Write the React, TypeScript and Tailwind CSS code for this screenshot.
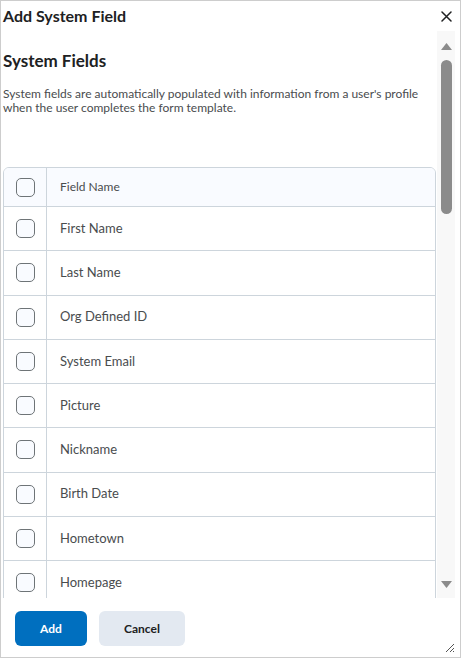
import React from 'react';

const fields = [
  'First Name',
  'Last Name',
  'Org Defined ID',
  'System Email',
  'Picture',
  'Nickname',
  'Birth Date',
  'Hometown',
  'Homepage',
];

const Checkbox = () => (
  <div className="w-[19px] h-[19px] rounded-[5px] border border-[#6e7477] bg-[#f9fbff]" />
);

const App = () => {
  return (
    <div
      className="w-[461px] h-[658px] bg-white border border-[#cdcdcd] flex flex-col text-[#202122]"
      style={{ fontFamily: 'Lato, "Open Sans", sans-serif' }}
    >
      {/* Header */}
      <div className="h-[29px] flex items-center justify-between pl-[2px] pr-[8px] shrink-0">
        <h1 className="text-[16px] font-bold leading-none">Add System Field</h1>
        <svg width="11" height="11" viewBox="0 0 11 11" className="mt-[2px]">
          <path d="M1 1L10 10M10 1L1 10" stroke="#202122" strokeWidth="1.5" strokeLinecap="round" />
        </svg>
      </div>

      {/* Body */}
      <div className="flex flex-1 min-h-0">
        <div className="flex-1 min-w-0 overflow-hidden pl-[2px] pr-[1px]">
          <h2 className="text-[17px] font-bold mt-[20px] leading-[22px]">System Fields</h2>
          <p className="text-[12px] leading-[14px] text-[#494c4e] mt-[15px] pr-[8px]">
            System fields are automatically populated with information from a user's profile
            when the user completes the form template.
          </p>

          <div className="mt-[52px] border border-[#cdd5dc] rounded-t-[6px] overflow-hidden">
            <div className="flex h-[39px] bg-[#f9fbff] border-b border-[#cdd5dc]">
              <div className="w-[43px] shrink-0 flex items-center justify-center border-r border-[#cdd5dc]">
                <Checkbox />
              </div>
              <div className="flex items-center pl-[13px] text-[12px] font-normal text-[#494c4e]">Field Name</div>
            </div>
            {fields.map((f) => (
              <div key={f} className="flex h-[44.25px] border-b border-[#cdd5dc]">
                <div className="w-[43px] shrink-0 flex items-center justify-center border-r border-[#cdd5dc]">
                  <Checkbox />
                </div>
                <div className="flex items-center pl-[13px] text-[13px] text-[#494c4e]">{f}</div>
              </div>
            ))}
          </div>
        </div>

        {/* Scrollbar */}
        <div className="w-[18px] shrink-0 bg-[#f8f8f8] flex flex-col items-center py-[12px] mr-[5px] mt-[1px]">
          <svg width="11" height="7" viewBox="0 0 11 7">
            <path d="M5.5 0L11 7H0Z" fill="#8b8b8b" />
          </svg>
          <div className="w-[11px] h-[154px] rounded-full bg-[#8b8b8b] mt-[10px]" />
          <div className="flex-1" />
          <svg width="11" height="7" viewBox="0 0 11 7" className="mb-[-2px]">
            <path d="M0 0H11L5.5 7Z" fill="#8b8b8b" />
          </svg>
        </div>
      </div>

      {/* Footer */}
      <div className="h-[59px] shrink-0 flex items-start gap-[12px] pl-[14px] pt-[13px] relative">
        <button className="w-[72px] h-[35px] rounded-[6px] bg-[#006fbf] text-white text-[12px] font-bold">
          Add
        </button>
        <button className="w-[86px] h-[35px] rounded-[6px] bg-[#e3e9f1] text-[#202122] text-[12px] font-bold">
          Cancel
        </button>
        <svg width="10" height="10" viewBox="0 0 10 10" className="absolute right-[5px] bottom-[4px]">
          <path d="M9 1L1 9M9 5L5 9M9 8L8 9" stroke="#555" strokeWidth="1" />
        </svg>
      </div>
    </div>
  );
};

export default App;
